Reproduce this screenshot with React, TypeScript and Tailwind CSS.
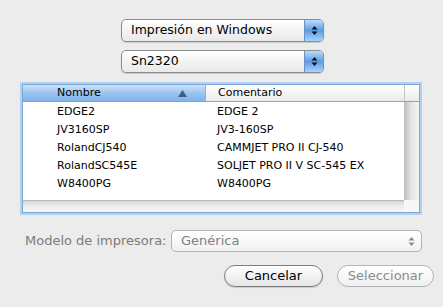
import React from "react";

const rows = [
  ["EDGE2", "EDGE 2"],
  ["JV3160SP", "JV3-160SP"],
  ["RolandCJ540", "CAMMJET PRO II CJ-540"],
  ["RolandSC545E", "SOLJET PRO II V SC-545 EX"],
  ["W8400PG", "W8400PG"],
];

function Arrows({ dim }: { dim?: boolean }) {
  return (
    <svg width="7" height="11" viewBox="0 0 7 11" className="block">
      <path d="M3.5 1 L6.5 4.5 L0.5 4.5 Z" fill={dim ? "#8a8a8a" : "#111"} />
      <path d="M3.5 10 L6.5 6.5 L0.5 6.5 Z" fill={dim ? "#8a8a8a" : "#111"} />
    </svg>
  );
}

function PopUp({ label }: { label: string }) {
  return (
    <div className="ml-[121px] w-[203px] h-[23px] flex rounded-[5px] border border-[#8c8c8c] overflow-hidden shadow-[0_1px_1px_rgba(0,0,0,0.15)] bg-gradient-to-b from-[#ffffff] via-[#f3f3f3] to-[#e9e9e9]">
      <div className="flex-1 flex items-center pl-[9px] text-[12.5px] text-black">{label}</div>
      <div className="w-[19px] flex items-center justify-center border-l border-[#6a8fc0] bg-gradient-to-b from-[#b9dcfb] via-[#5b9ce6] to-[#a6d3fa]">
        <Arrows />
      </div>
    </div>
  );
}

export default function App() {
  return (
    <div className="w-[443px] h-[307px] bg-[#ececec] overflow-hidden flex flex-col" style={{ fontFamily: '"DejaVu Sans", sans-serif' }}>
      <div className="mt-[19px]"><PopUp label="Impresión en Windows" /></div>
      <div className="mt-[8px]"><PopUp label="Sn2320" /></div>

      {/* table */}
      <div className="mt-[11px] ml-[22px] w-[398px] h-[129px] border border-[#7ea7da] shadow-[0_0_0_2px_#b4d0f1] flex flex-col bg-white text-[11px] text-black">
        <div className="flex h-[17px] border-b border-[#a0a0a0]">
          <div className="w-[183px] flex items-center pl-[34px] pr-[18px] justify-between bg-gradient-to-b from-[#cfe3f8] via-[#9cc4ef] to-[#7fb2ea] border-r border-[#8fb0d6]">
            <span>Nombre</span>
            <svg width="9" height="7" viewBox="0 0 9 7"><path d="M4.5 0 L9 7 L0 7 Z" fill="#3f5f86" /></svg>
          </div>
          <div className="flex-1 flex items-center pl-[12px] bg-gradient-to-b from-[#ffffff] to-[#ebebeb]">Comentario</div>
          <div className="w-[15px] border-l border-[#c4c4c4] bg-gradient-to-b from-[#ffffff] to-[#ebebeb]" />
        </div>
        <div className="flex h-[98px]">
          <div className="flex-1 flex flex-col pt-[1px] bg-white">
            {rows.map(([a, b]) => (
              <div key={a} className="flex h-[18px] items-center">
                <div className="w-[183px] pl-[34px]">{a}</div>
                <div className="flex-1 pl-[11px]">{b}</div>
              </div>
            ))}
          </div>
          <div className="w-[15px] bg-gradient-to-r from-[#bdbdbd] via-[#e6e6e6] to-[#f4f4f4]" />
        </div>
        <div className="flex flex-1">
          <div className="flex-1 border-t border-[#b8b8b8] bg-gradient-to-b from-[#d6d6d6] via-[#eeeeee] to-[#f6f6f6]" />
          <div className="w-[15px] bg-[#f7f7f7]" />
        </div>
      </div>

      {/* model row */}
      <div className="mt-[17px] flex items-center h-[22px]">
        <div className="ml-[25px] w-[146px] text-[13px] text-[#7b7b7b]">Modelo de impresora:</div>
        <div className="w-[251px] h-[22px] flex rounded-[5px] border border-[#b3b3b3] bg-gradient-to-b from-[#ffffff] to-[#f1f1f1]">
          <div className="flex-1 flex items-center pl-[9px] text-[13px] text-[#808080]">Genérica</div>
          <div className="w-[19px] flex items-center justify-center"><Arrows dim /></div>
        </div>
      </div>

      {/* buttons */}
      <div className="mt-[13px] flex h-[22px]">
        <div className="ml-[224px] w-[99px] rounded-full border border-[#7d7d7d] flex items-center justify-center text-[13px] text-black bg-gradient-to-b from-[#ffffff] via-[#f2f2f2] to-[#e4e4e4] shadow-[0_1px_1px_rgba(0,0,0,0.15)]">Cancelar</div>
        <div className="ml-[14px] w-[97px] rounded-full border border-[#b5b5b5] flex items-center justify-center text-[13px] text-[#8c8c8c] bg-gradient-to-b from-[#ffffff] to-[#f0f0f0]">Seleccionar</div>
      </div>
    </div>
  );
}
